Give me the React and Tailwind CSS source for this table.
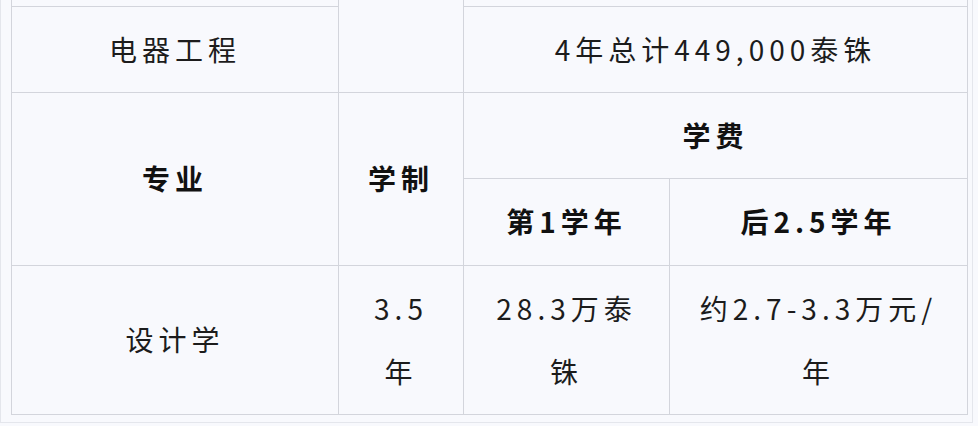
import React from "react";

const cell = "border border-[#d3d5dc] text-center align-middle p-0 leading-[63px]";
const head = `${cell} font-bold text-[#111]`;

const App = () => {
  return (
    <div
      className="w-[978px] h-[426px] bg-[#f8f9fd] overflow-hidden"
      style={{ fontFamily: '"Microsoft YaHei", "Noto Sans CJK SC", "Noto Sans", sans-serif' }}
    >
      <div className="w-[973px] h-[423px] border-l border-r border-b border-[#e4e6ec] pl-[10px]">
        <table className="table-fixed border-collapse w-[956px] text-[28px] tracking-[5px] text-[#1c1c1c]">
          <colgroup>
            <col className="w-[327px]" />
            <col className="w-[125px]" />
            <col className="w-[206px]" />
            <col className="w-[298px]" />
          </colgroup>
          <tbody>
            <tr className="h-[6px]">
              <td className={`${cell} leading-none [border-top-style:hidden]`}></td>
              <td rowSpan={2} className={`${cell} [border-top-style:hidden]`}></td>
              <td colSpan={2} className={`${cell} leading-none [border-top-style:hidden]`}></td>
            </tr>
            <tr className="h-[86px]">
              <td className={cell}>电器工程</td>
              <td colSpan={2} className={cell}>4年总计449,000泰铢</td>
            </tr>
            <tr className="h-[86px]">
              <td rowSpan={2} className={head}>专业</td>
              <td rowSpan={2} className={head}>学制</td>
              <td colSpan={2} className={head}>学费</td>
            </tr>
            <tr className="h-[87px]">
              <td className={head}>第1学年</td>
              <td className={head}>后2.5学年</td>
            </tr>
            <tr className="h-[149px]">
              <td className={cell}>设计学</td>
              <td className={cell}>3.5<br />年</td>
              <td className={cell}>28.3万泰<br />铢</td>
              <td className={cell}>约2.7-3.3万元/<br />年</td>
            </tr>
          </tbody>
        </table>
      </div>
    </div>
  );
};

export default App;
